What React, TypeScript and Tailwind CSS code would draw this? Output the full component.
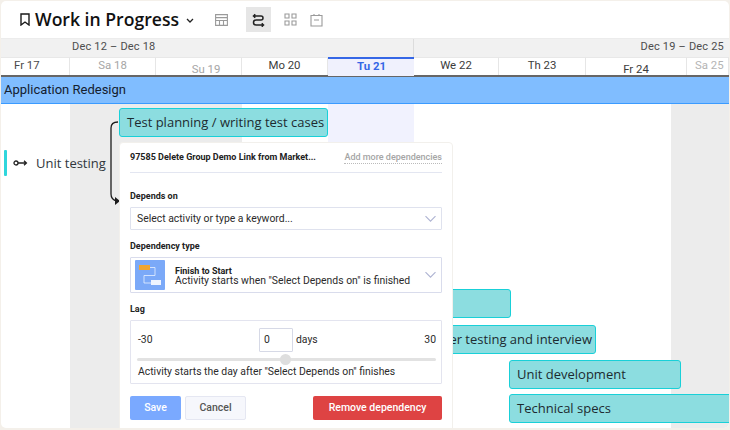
import React from "react";

const roboto = "font-['Roboto',sans-serif]";
const open = "font-['Open_Sans',sans-serif]";

function Chevron() {
  return (
    <svg width="11" height="7" viewBox="0 0 11 7" fill="none" stroke="#aeb3d2" strokeWidth="1.1" className="absolute right-[5px] top-1/2 -translate-y-1/2">
      <path d="M.5.700l5 5 5-5" />
    </svg>
  );
}

const days = [
  { w: "w-[69px]", t: "Fr 17", c: "text-[#4a4a4a]", extra: "text-left pl-[13px]" },
  { w: "w-[86px]", t: "Sa 18", c: "text-[#a6a6a6]", extra: "text-center" },
  { w: "w-[86px]", t: "Su 19", c: "text-[#a6a6a6]", extra: "text-center pt-[4px] pl-[15px]" },
  { w: "w-[86px]", t: "Mo 20", c: "text-[#3c3c3c]", extra: "text-center" },
  { w: "w-[86px]", t: "Tu 21", c: "text-[#3567e6] font-bold", extra: "today" },
  { w: "w-[85px]", t: "We 22", c: "text-[#3c3c3c]", extra: "text-center" },
  { w: "w-[87px]", t: "Th 23", c: "text-[#3c3c3c]", extra: "text-center" },
  { w: "w-[101px]", t: "Fr 24", c: "text-[#3c3c3c]", extra: "text-center pt-[4px]" },
  { w: "flex-1", t: "Sa 25", c: "text-[#b4b4b4]", extra: "text-left pl-[8px]" },
];

function Bar({ cls, children }: { cls: string; children?: React.ReactNode }) {
  return (
    <div className={`absolute h-[29px] bg-[#8cdde0] border border-[#19d0d8] rounded-[3px] flex items-center text-[13px] text-[#1d2b30] whitespace-nowrap ${open} ${cls}`}>
      {children}
    </div>
  );
}

const label = "text-[9px] font-bold leading-[12px] text-[#222]";

export default function App() {
  return (
    <div className="w-[730px] h-[430px] bg-[#f4f0ea] pt-px pl-px overflow-hidden">
      <div className="w-[728px] h-[427px] bg-white rounded-[5px] overflow-hidden flex flex-col">
        {/* toolbar */}
        <div className="h-[37px] shrink-0 flex items-center">
          <svg width="10" height="13" viewBox="0 0 10 13" fill="none" stroke="#1a1a1a" strokeWidth="1.4" className="ml-[19px]">
            <path d="M1 1h8v11L5 9l-4 3z" />
          </svg>
          <span className={`ml-[5px] text-[17.6px] leading-none font-semibold text-[#111] ${open}`}>Work in Progress</span>
          <svg width="8" height="5" viewBox="0 0 8 5" fill="none" stroke="#222" strokeWidth="1.3" className="ml-[7px] mt-[2px]">
            <path d="M1 1l3 3 3-3" />
          </svg>
          <svg width="13" height="12" viewBox="0 0 13 12" fill="none" stroke="#9a9a9a" strokeWidth="1.1" className="ml-[21px]">
            <path d="M.6.600h11.800v10.800H.6zM.6 3.600h11.800M.6 6.500h11.800M4.500 6.500v5M8.500 6.500v5" />
          </svg>
          <div className="ml-[18px] w-[25px] h-[25px] bg-[#e6e6e6] flex items-center justify-center">
            <svg width="13" height="14" viewBox="0 0 13 14" fill="none" stroke="#222" strokeWidth="1.5">
              <path d="M2 3h7a2 2 0 010 4H4a2.5 2.5 0 000 5h7" />
              <path d="M3 1L.8 3 3 5z" fill="#222" strokeWidth="0.8" />
              <path d="M10 10l2.200 2-2.200 2z" fill="#222" strokeWidth="0.8" />
            </svg>
          </div>
          <svg width="13" height="13" viewBox="0 0 13 13" fill="none" stroke="#9a9a9a" strokeWidth="1.1" className="ml-[13px]">
            <path d="M1 1h4v4H1zM8 1h4v4H8zM1 8h4v4H1zM8 8h4v4H8z" />
          </svg>
          <svg width="13" height="14" viewBox="0 0 13 14" fill="none" stroke="#9a9a9a" strokeWidth="1.1" className="ml-[13px]">
            <path d="M1 2.500h11V13H1zM4 1v2M9 1v2M4 7h5" />
          </svg>
        </div>

        {/* week row */}
        <div className={`h-[19px] shrink-0 bg-[#f1f1f1] flex text-[11px] text-[#4d4d4d] border-t border-[#ececec] ${roboto}`}>
          <div className="w-[412px] pl-[71px] leading-[15px] tracking-[0.2px]">Dec 12 – Dec 18</div>
          <div className="flex-1 border-l border-[#dcdcdc] text-right pr-[5px] leading-[15px] tracking-[0.2px]">Dec 19 – Dec 25</div>
        </div>

        {/* day row */}
        <div className={`h-[20px] shrink-0 flex border-b-2 border-[#666] text-[11.4px] whitespace-nowrap ${roboto}`}>
          {days.map((d) =>
            d.extra === "today" ? (
              <div key={d.t} className={`${d.w} h-[19px] bg-[#f0f1fd] border-t-2 border-[#3567e6] text-center leading-[15px] pl-[1px] ${d.c}`}>{d.t}</div>
            ) : (
              <div key={d.t} className={`${d.w} h-[18px] border-r border-[#e6e6e6] border-t border-t-[#e8e8e8] leading-[15px] ${d.c} ${d.extra}`}>{d.t}</div>
            )
          )}
        </div>

        {/* project bar */}
        <div className={`h-[27px] shrink-0 bg-[#80bdff] border-b border-[#3b9bff] flex items-center pl-[3px] text-[13px] text-[#14202f] ${roboto}`}>
          Application Redesign
        </div>

        {/* canvas */}
        <div className="relative flex-1 flex">
          <div className="w-[69px] shrink-0" />
          <div className="w-[172px] shrink-0 bg-[#ececec]" />
          <div className="w-[86px] shrink-0" />
          <div className="w-[86px] shrink-0 bg-[#f1f2fe]" />
          <div className="w-[257px] shrink-0" />
          <div className="flex-1 bg-[#ececec]" />

          {/* row label */}
          <div className="absolute left-[3px] top-[46px] w-[3px] h-[26px] rounded-[1px] bg-[#2fd6dc]" />
          <svg width="15" height="8" viewBox="0 0 15 8" fill="none" stroke="#222" strokeWidth="1.3" className="absolute left-[12px] top-[55px]">
            <circle cx="3" cy="4" r="2" />
            <path d="M5 4h8M11 1.800L13.400 4 11 6.200" />
          </svg>
          <div className={`absolute left-[35px] top-[49px] text-[13px] leading-[20px] text-[#30373c] ${open}`}>Unit testing</div>

          {/* connector */}
          <svg width="14" height="90" viewBox="0 0 14 90" fill="none" className="absolute left-[107px] top-[17px]">
            <path d="M10 1C5 1 3 3 3 7v66c0 3 1 6 6 7" stroke="#1c1c1c" strokeWidth="1.3" />
            <path d="M7 76l5 4-5 4z" fill="#1c1c1c" />
          </svg>

          {/* bars */}
          <Bar cls="left-[118px] top-[4px] w-[209px] pl-[7px]">Test planning / writing test cases</Bar>
          <Bar cls="left-[400px] top-[185px] w-[110px]" />
          <Bar cls="left-[400px] top-[221px] w-[195px] justify-end pr-[3px]">er testing and interview</Bar>
          <Bar cls="left-[508px] top-[256px] w-[172px] pl-[7px]">Unit development</Bar>
          <Bar cls="left-[508px] top-[290px] w-[240px] pl-[7px]">Technical specs</Bar>

          {/* popover */}
          <div className={`absolute left-[118px] top-[38px] w-[334px] h-[300px] bg-white rounded-[4px] border border-[#f2f0ec] px-[10px] text-[#2b2b2b] ${roboto}`}>
            <div className="h-[30px] flex items-center justify-between border-b border-[#e3e6f1]">
              <span className="text-[9px] font-bold text-[#222]">97585 Delete Group Demo Link from Market...</span>
              <span className="text-[9px] font-medium text-[#a5a5a5] border-b border-dotted border-[#bbb] leading-[11px]">Add more dependencies</span>
            </div>

            <div className={`mt-[17px] ${label}`}>Depends on</div>
            <div className="relative mt-[5px] h-[23px] border border-[#dfe2ee] rounded-[1px] flex items-center pl-[6px] text-[10.400px]">
              Select activity or type a keyword...
              <Chevron />
            </div>

            <div className={`mt-[10px] ${label}`}>Dependency type</div>
            <div className="relative mt-[5px] h-[36px] border border-[#d9dcec] rounded-[1px] flex items-center pl-[4px]">
              <div className="w-[30px] h-[30px] rounded-[1px] bg-[#7ba9f8] shrink-0">
                <svg width="30" height="30" viewBox="0 0 30 30" fill="none">
                  <rect x="4" y="5" width="11" height="5" fill="#f0a531" />
                  <path d="M15 7.500h5v8h-11v7.500h10" stroke="#e9f1ff" strokeWidth="0.8" />
                  <rect x="16" y="20" width="10" height="5" fill="#eef4ff" />
                </svg>
              </div>
              <div className="ml-[10px] text-[10.400px] leading-[10px] mt-[2px]">
                <div className="text-[9px] font-bold text-[#222] leading-[9px]">Finish to Start</div>
                <div>Activity starts when "Select Depends on" is finished</div>
              </div>
              <Chevron />
            </div>

            <div className={`mt-[10px] ${label}`}>Lag</div>
            <div className="mt-[5px] h-[64px] border border-[#e3e4ef] rounded-[1px] pl-[6px] pr-[5px] text-[10.400px]">
              <div className="h-[24px] mt-[7px] flex items-center">
                <span className="w-[122px] pl-px">-30</span>
                <div className="w-[34px] h-[24px] border border-[#d6d9e6] rounded-[1px] flex items-center pl-[4px]">0</div>
                <span className="ml-[3px] flex-1">days</span>
                <span>30</span>
              </div>
              <div className="relative h-[3px] mt-[6px] bg-[#e2e2e2] rounded-full">
                <div className="absolute left-[143px] top-[-4px] w-[11px] h-[11px] rounded-full bg-[#dedede]" />
              </div>
              <div className="mt-[4px] pl-px leading-[14px]">Activity starts the day after "Select Depends on" finishes</div>
            </div>

            <div className="mt-[12px] flex text-[10.500px] font-medium">
              <div className="w-[51px] h-[24px] rounded-[2px] bg-[#7aa9ff] text-white flex items-center justify-center">Save</div>
              <div className="ml-[4px] w-[61px] h-[24px] rounded-[2px] bg-[#f6f7fc] border border-[#e5e7f2] text-[#555] flex items-center justify-center">Cancel</div>
              <div className="ml-auto w-[129px] h-[24px] rounded-[2px] bg-[#de4343] text-white flex items-center justify-center">Remove dependency</div>
            </div>
          </div>
        </div>
      </div>
    </div>
  );
}
